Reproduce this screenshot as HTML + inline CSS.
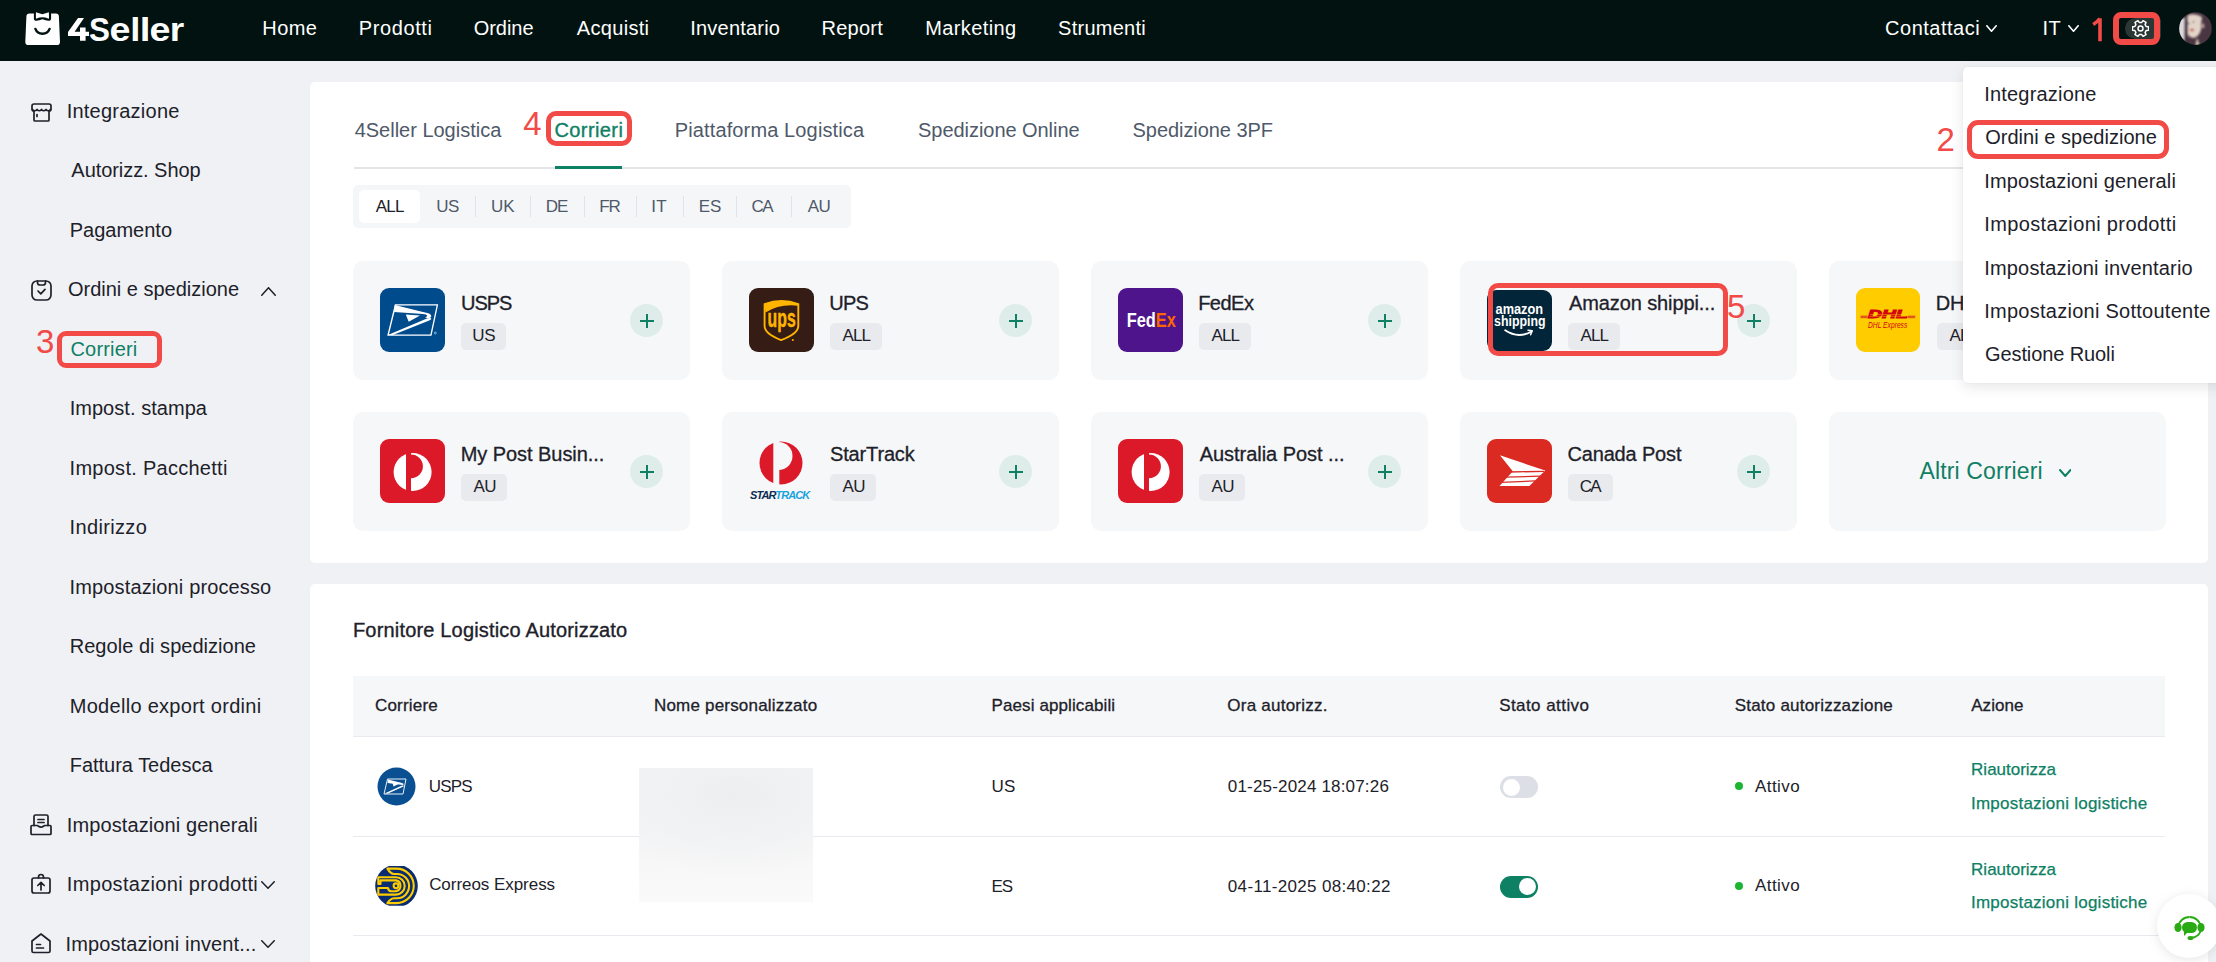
<!DOCTYPE html>
<html><head><meta charset="utf-8"><style>
html,body{margin:0;padding:0}
body{width:2216px;height:962px;overflow:hidden;position:relative;background:#f0f1f5;font-family:"Liberation Sans",sans-serif}
.t{position:absolute;white-space:nowrap;line-height:1}
.r{position:absolute;display:block}
</style></head><body>
<div class="r" style="left:0px;top:0px;width:2216px;height:61px;background:#021210"></div>
<svg class="r" style="left:25px;top:11px;" width="36" height="36" viewBox="0 0 36 36">
<path d="M1.4 5.6 Q1.4 2.5 4.5 2.5 H30.8 Q33.9 2.5 33.9 5.6 L35 31 Q35 34.1 31.9 34.1 H3.4 Q0.3 34.1 0.3 31 Z" fill="#fff"/>
<path d="M8.9 -1 H26.1 V7.2 Q26.1 9.8 23.5 9.8 Q20.4 9.6 17.4 8.3 Q14.4 9.6 11.5 9.8 Q8.9 9.8 8.9 7.2 Z" fill="#021210"/>
<path d="M10.9 1.9 Q10.9 1.1 11.7 1.4 L17.4 3.3 L23.1 1.4 Q23.9 1.1 23.9 1.9 L24 7 Q24 7.9 23.2 7.6 Q20.3 6.3 17.4 6.3 Q14.5 6.3 11.6 7.6 Q10.9 7.9 10.9 7 Z" fill="#fff"/>
<path d="M10.4 17.9 A7.6 7.6 0 0 0 24.6 17.9" stroke="#021210" stroke-width="2.4" fill="none" stroke-linecap="round"/>
</svg>
<svg class="r" style="left:0px;top:0px;" width="200" height="61" viewBox="0 0 200 61"><path d="M78 17.9 L84 17.9 L74.6 31.8 L80 31.8 L80 27.6 L85.6 27.6 L85.6 31.8 L89 31.8 L89 35.9 L85.6 35.9 L85.6 40.8 L80 40.8 L80 35.9 L68 35.9 L68 32 Z" fill="#fff"/><text transform="translate(89.00 40.9) scale(0.951 1)" font-family="Liberation Sans" font-weight="bold" font-size="33" fill="#fff">S</text><text transform="translate(109.53 40.9) scale(1.142 1)" font-family="Liberation Sans" font-weight="bold" font-size="33" fill="#fff">e</text><text transform="translate(130.16 40.9) scale(1.104 1)" font-family="Liberation Sans" font-weight="bold" font-size="33" fill="#fff">l</text><text transform="translate(139.70 40.9) scale(1.171 1)" font-family="Liberation Sans" font-weight="bold" font-size="33" fill="#fff">l</text><text transform="translate(149.43 40.9) scale(1.142 1)" font-family="Liberation Sans" font-weight="bold" font-size="33" fill="#fff">e</text><text transform="translate(169.85 40.9) scale(1.126 1)" font-family="Liberation Sans" font-weight="bold" font-size="33" fill="#fff">r</text></svg>
<div class="t" style="left:262.36px;top:18.07px;font-size:20px;letter-spacing:0.36px;color:#ffffff;">Home</div>
<div class="t" style="left:358.86px;top:18.07px;font-size:20px;letter-spacing:0.58px;color:#ffffff;">Prodotti</div>
<div class="t" style="left:473.65px;top:18.07px;font-size:20px;letter-spacing:-0.019px;color:#ffffff;">Ordine</div>
<div class="t" style="left:576.86px;top:18.07px;font-size:20px;letter-spacing:0.308px;color:#ffffff;">Acquisti</div>
<div class="t" style="left:690.25px;top:18.07px;font-size:20px;letter-spacing:0.206px;color:#ffffff;">Inventario</div>
<div class="t" style="left:821.46px;top:18.07px;font-size:20px;letter-spacing:0.252px;color:#ffffff;">Report</div>
<div class="t" style="left:925.26px;top:18.07px;font-size:20px;letter-spacing:0.39px;color:#ffffff;">Marketing</div>
<div class="t" style="left:1058.09px;top:18.07px;font-size:20px;letter-spacing:0.259px;color:#ffffff;">Strumenti</div>
<div class="t" style="left:1885.08px;top:18.07px;font-size:20px;letter-spacing:0.502px;color:#ffffff;">Contattaci</div>
<svg class="r" style="left:1986px;top:24.5px;" width="11" height="7" viewBox="0 0 11 7"><path d="M0.8 0.8 L5.5 6.2 L10.2 0.8" fill="none" stroke="#ffffff" stroke-width="1.6" stroke-linecap="round" stroke-linejoin="round"/></svg>
<div class="t" style="left:2042.4px;top:18.07px;font-size:20px;letter-spacing:0.581px;color:#ffffff;">IT</div>
<svg class="r" style="left:2068px;top:24.5px;" width="11" height="7" viewBox="0 0 11 7"><path d="M0.8 0.8 L5.5 6.2 L10.2 0.8" fill="none" stroke="#ffffff" stroke-width="1.6" stroke-linecap="round" stroke-linejoin="round"/></svg>
<svg class="r" style="left:2090px;top:16px;" width="16" height="27" viewBox="0 0 16 27"><path d="M10 2.2 V25.2 M10 2.6 Q7 6 3.2 8.5" fill="none" stroke="#f24a47" stroke-width="3.6" stroke-linejoin="miter"/></svg>
<div class="r" style="left:2124.5px;top:18px;width:36px;height:21px;background:#2b3734;border-radius:10.5px 3px 3px 10.5px"></div>
<svg class="r" style="left:2132px;top:19.8px;" width="17" height="17" viewBox="0 0 17 17"><g fill="none" stroke="#fff" stroke-width="1.5" stroke-linejoin="round"><path d="M14.14 6.45 L16.52 6.80 L16.52 10.20 L14.14 10.55 L13.10 12.36 L13.99 14.59 L11.03 16.30 L9.54 14.41 L7.46 14.41 L5.97 16.30 L3.01 14.59 L3.90 12.36 L2.86 10.55 L0.48 10.20 L0.48 6.80 L2.86 6.45 L3.90 4.64 L3.01 2.41 L5.97 0.70 L7.46 2.59 L9.54 2.59 L11.03 0.70 L13.99 2.41 L13.10 4.64 Z"/><circle cx="8.5" cy="8.5" r="2.5"/></g></svg>
<div class="r" style="left:2113.4px;top:11.9px;width:46.5px;height:33px;border:6.2px solid #f24a47;border-radius:8px;box-sizing:border-box"></div>
<svg class="r" style="left:2179px;top:12px" width="33" height="33" viewBox="0 0 33 33"><defs><clipPath id="avc"><circle cx="16.5" cy="16.5" r="16.3"/></clipPath><filter id="avb"><feGaussianBlur stdDeviation="0.8"/></filter></defs>
<g clip-path="url(#avc)"><rect width="33" height="33" fill="#4a3542"/><g filter="url(#avb)">
<rect x="-2" y="6" width="8" height="22" fill="#dcd9dc"/>
<path d="M-2 26 Q3 25 6 29 L6 36 L-2 36Z" fill="#d9c6b9"/>
<path d="M9 3 Q17 1 23 5 Q22 10 22 18 Q20 25 14 26 Q9 25 8.5 20 Q7 10 9 3Z" fill="#e2d4c8"/>
<path d="M5.5 5 Q8 4 9 8 L9 30 L5 30Z" fill="#4b3542"/>
<path d="M18 26 Q20 29 20.5 35 L16 35 Q17 30 18 26Z" fill="#dccab9"/>
<path d="M23.5 11 Q26 12 25 16 L22.5 16Z" fill="#cdb5a6"/>
<ellipse cx="13" cy="18" rx="2.2" ry="1.2" fill="#c83a3a"/>
<circle cx="14.5" cy="10" r="0.8" fill="#3a3050"/><circle cx="10" cy="11.5" r="0.8" fill="#3a3050"/>
</g></g></svg>
<svg class="r" style="left:30.5px;top:102px;" width="22" height="21" viewBox="0 0 22 21"><g fill="none" stroke="#1d2129" stroke-width="1.7" stroke-linejoin="round" stroke-linecap="round">
<path d="M3 2 h15 q2 0 2 2 v3 q0 2 -2 2 v9 q0 1 -1 1 h-13 q-1 0 -1 -1 v-9 q-2 0 -2 -2 v-3 q0 -2 2 -2z"/>
<path d="M1.5 7.5 q2.2 2.5 4.5 0 q2.2 2.5 4.5 0 q2.2 2.5 4.5 0 q2.2 2.5 4.5 0"/>
<path d="M6 12.5 v2"/></g></svg>
<svg class="r" style="left:30.5px;top:279.5px;" width="21" height="21" viewBox="0 0 21 21"><g fill="none" stroke="#1d2129" stroke-width="1.7" stroke-linejoin="round" stroke-linecap="round">
<rect x="1" y="1" width="19" height="19" rx="5"/>
<path d="M6.5 1.2 v1.3 q0 2.5 2.5 2.5 h3 q2.5 0 2.5 -2.5 v-1.3"/>
<path d="M7 11 l2.8 2.8 l4.2 -4.5"/></g></svg>
<svg class="r" style="left:30px;top:814px;" width="22" height="22" viewBox="0 0 22 22"><g fill="none" stroke="#1d2129" stroke-width="1.7" stroke-linejoin="round" stroke-linecap="round">
<path d="M4 11.5 v-9 q0 -1.5 1.5 -1.5 h11 q1.5 0 1.5 1.5 v9"/>
<path d="M1 12.5 q0 -1 1 -1 h5 q1 0 1.5 0.7 q2.5 1.8 5 0 q0.5 -0.7 1.5 -0.7 h5 q1 0 1 1 v7 q0 1 -1 1 h-18 q-1 0 -1 -1 z"/>
<path d="M8 5.5 h6 M8 8.5 h6"/></g></svg>
<svg class="r" style="left:31px;top:872.5px;" width="20" height="22" viewBox="0 0 20 22"><g fill="none" stroke="#1d2129" stroke-width="1.7" stroke-linejoin="round" stroke-linecap="round">
<rect x="1" y="5" width="18" height="15" rx="2"/>
<path d="M7.5 5 v-1 q0 -2.5 2.5 -2.5 q2.5 0 2.5 2.5 v1"/>
<path d="M10 17 v-7.5 M6.8 12.5 l3.2 -3.2 l3.2 3.2"/></g></svg>
<svg class="r" style="left:30.5px;top:933px;" width="20" height="21" viewBox="0 0 20 21"><g fill="none" stroke="#1d2129" stroke-width="1.7" stroke-linejoin="round" stroke-linecap="round">
<path d="M1 8 l9 -7 l9 7 v10 q0 1.5 -1.5 1.5 h-15 q-1.5 0 -1.5 -1.5 z"/>
<path d="M5.5 11.5 h4 M5.5 15 h7"/></g></svg>
<div class="t" style="left:66.65px;top:100.97px;font-size:20px;letter-spacing:0.241px;color:#1d2129;">Integrazione</div>
<div class="t" style="left:71.36px;top:160.47px;font-size:20px;letter-spacing:-0.061px;color:#1d2129;">Autorizz. Shop</div>
<div class="t" style="left:69.76px;top:219.97px;font-size:20px;letter-spacing:-0.002px;color:#1d2129;">Pagamento</div>
<div class="t" style="left:67.95px;top:279.47px;font-size:20px;letter-spacing:-0.004px;color:#1d2129;">Ordini e spedizione</div>
<div class="t" style="left:70.48px;top:338.97px;font-size:20px;letter-spacing:0.172px;color:#0e8064;">Corrieri</div>
<div class="t" style="left:69.65px;top:398.47px;font-size:20px;letter-spacing:0.048px;color:#1d2129;">Impost. stampa</div>
<div class="t" style="left:69.55px;top:457.97px;font-size:20px;letter-spacing:0.275px;color:#1d2129;">Impost. Pacchetti</div>
<div class="t" style="left:69.55px;top:517.47px;font-size:20px;letter-spacing:0.352px;color:#1d2129;">Indirizzo</div>
<div class="t" style="left:69.55px;top:576.97px;font-size:20px;letter-spacing:0.135px;color:#1d2129;">Impostazioni processo</div>
<div class="t" style="left:69.76px;top:636.47px;font-size:20px;letter-spacing:0.029px;color:#1d2129;">Regole di spedizione</div>
<div class="t" style="left:69.76px;top:695.97px;font-size:20px;letter-spacing:0.287px;color:#1d2129;">Modello export ordini</div>
<div class="t" style="left:69.76px;top:755.47px;font-size:20px;letter-spacing:-0.02px;color:#1d2129;">Fattura Tedesca</div>
<div class="t" style="left:66.85px;top:814.97px;font-size:20px;letter-spacing:0.095px;color:#1d2129;">Impostazioni generali</div>
<div class="t" style="left:66.85px;top:874.47px;font-size:20px;letter-spacing:0.318px;color:#1d2129;">Impostazioni prodotti</div>
<div class="t" style="left:65.45px;top:933.97px;font-size:20px;letter-spacing:0.138px;color:#1d2129;">Impostazioni invent...</div>
<svg class="r" style="left:261px;top:286.5px;" width="15" height="9" viewBox="0 0 15 9"><path d="M0.75 8.25 L7.5 0.75 L14.25 8.25" fill="none" stroke="#1d2129" stroke-width="1.5" stroke-linecap="round" stroke-linejoin="round"/></svg>
<svg class="r" style="left:261px;top:880.5px;" width="14" height="8" viewBox="0 0 14 8"><path d="M0.75 0.75 L7.0 7.25 L13.25 0.75" fill="none" stroke="#1d2129" stroke-width="1.5" stroke-linecap="round" stroke-linejoin="round"/></svg>
<svg class="r" style="left:261px;top:940px;" width="14" height="8" viewBox="0 0 14 8"><path d="M0.75 0.75 L7.0 7.25 L13.25 0.75" fill="none" stroke="#1d2129" stroke-width="1.5" stroke-linecap="round" stroke-linejoin="round"/></svg>
<div class="t" style="left:36.04px;top:325.06px;font-size:33px;letter-spacing:0px;color:#f24a47;">3</div>
<div class="r" style="left:57px;top:331px;width:104.6px;height:36.6px;border:5.5px solid #f24a47;border-radius:9px;box-sizing:border-box"></div>
<div class="r" style="left:310px;top:82px;width:1898px;height:481px;background:#fff;border-radius:5px"></div>
<div class="r" style="left:354px;top:167px;width:1811px;height:2px;background:#e3e5e9"></div>
<div class="r" style="left:555px;top:166px;width:67px;height:3px;background:#0e8064"></div>
<div class="t" style="left:354.64px;top:120.47px;font-size:20px;letter-spacing:-0.006px;color:#4e5969;">4Seller Logistica</div>
<div class="t" style="left:554.48px;top:120.47px;font-size:20px;letter-spacing:0.401px;color:#0e8064;-webkit-text-stroke:0.35px #0e8064">Corrieri</div>
<div class="t" style="left:674.76px;top:120.47px;font-size:20px;letter-spacing:0.129px;color:#4e5969;">Piattaforma Logistica</div>
<div class="t" style="left:918.09px;top:120.47px;font-size:20px;letter-spacing:-0.052px;color:#4e5969;">Spedizione Online</div>
<div class="t" style="left:1132.59px;top:120.47px;font-size:20px;letter-spacing:-0.061px;color:#4e5969;">Spedizione 3PF</div>
<div class="t" style="left:523.34px;top:106.96px;font-size:33px;letter-spacing:0px;color:#f24a47;">4</div>
<div class="r" style="left:546px;top:111px;width:86.4px;height:34.5px;border:5.5px solid #f24a47;border-radius:10px;box-sizing:border-box"></div>
<div class="r" style="left:353px;top:185px;width:498px;height:43px;background:#f5f6f8;border-radius:5px"></div>
<div class="r" style="left:359px;top:190px;width:61px;height:32.5px;background:#fff;border-radius:5px"></div>
<div class="t" style="left:375.87px;top:197.61px;font-size:17px;letter-spacing:-0.825px;color:#1d2129;">ALL</div>
<div class="t" style="left:436.19px;top:197.61px;font-size:17px;letter-spacing:-0.524px;color:#4e5969;">US</div>
<div class="t" style="left:491.09px;top:197.61px;font-size:17px;letter-spacing:-0.213px;color:#4e5969;">UK</div>
<div class="t" style="left:545.71px;top:197.61px;font-size:17px;letter-spacing:-1.091px;color:#4e5969;">DE</div>
<div class="t" style="left:599.31px;top:197.61px;font-size:17px;letter-spacing:-1.278px;color:#4e5969;">FR</div>
<div class="t" style="left:651.13px;top:197.61px;font-size:17px;letter-spacing:0.352px;color:#4e5969;">IT</div>
<div class="t" style="left:698.71px;top:197.61px;font-size:17px;letter-spacing:-0.103px;color:#4e5969;">ES</div>
<div class="t" style="left:751.44px;top:197.61px;font-size:17px;letter-spacing:-1.519px;color:#4e5969;">CA</div>
<div class="t" style="left:807.77px;top:197.61px;font-size:17px;letter-spacing:-0.571px;color:#4e5969;">AU</div>
<div class="r" style="left:475px;top:196px;width:1px;height:21px;background:#e1e3e8"></div>
<div class="r" style="left:530px;top:196px;width:1px;height:21px;background:#e1e3e8"></div>
<div class="r" style="left:584px;top:196px;width:1px;height:21px;background:#e1e3e8"></div>
<div class="r" style="left:636px;top:196px;width:1px;height:21px;background:#e1e3e8"></div>
<div class="r" style="left:683px;top:196px;width:1px;height:21px;background:#e1e3e8"></div>
<div class="r" style="left:736px;top:196px;width:1px;height:21px;background:#e1e3e8"></div>
<div class="r" style="left:791px;top:196px;width:1px;height:21px;background:#e1e3e8"></div>
<div class="r" style="left:353px;top:261px;width:337px;height:118.5px;background:#f6f7f9;border-radius:10px"></div>
<div class="r" style="left:722px;top:261px;width:337px;height:118.5px;background:#f6f7f9;border-radius:10px"></div>
<div class="r" style="left:1091px;top:261px;width:337px;height:118.5px;background:#f6f7f9;border-radius:10px"></div>
<div class="r" style="left:1460px;top:261px;width:337px;height:118.5px;background:#f6f7f9;border-radius:10px"></div>
<div class="r" style="left:1829px;top:261px;width:337px;height:118.5px;background:#f6f7f9;border-radius:10px"></div>
<div class="r" style="left:353px;top:412px;width:337px;height:118.5px;background:#f6f7f9;border-radius:10px"></div>
<div class="r" style="left:722px;top:412px;width:337px;height:118.5px;background:#f6f7f9;border-radius:10px"></div>
<div class="r" style="left:1091px;top:412px;width:337px;height:118.5px;background:#f6f7f9;border-radius:10px"></div>
<div class="r" style="left:1460px;top:412px;width:337px;height:118.5px;background:#f6f7f9;border-radius:10px"></div>
<div class="r" style="left:1829px;top:412px;width:337px;height:118.5px;background:#f6f7f9;border-radius:10px"></div>
<svg class="r" style="left:380px;top:288px" width="65" height="64" viewBox="0 0 65 64"><rect x="0" y="0" width="65" height="64" rx="9" fill="#004b8c"/><g fill="#fff">
<path d="M14.9 16.3 L58.2 16.3 L51.5 47.8 L7.2 47.8 Z M16.1 17.6 L8.9 46.5 L50.4 46.5 L56.6 17.6 Z" fill-rule="evenodd"/>
<path d="M14.8 17.1 L44 24.2 Q51.5 25.4 51.3 28.2 Q51 30.2 48 30.3 L45 29.2 Q47.6 28.6 47.2 27.5 Q46.7 26.4 43 26.1 L14.1 24.1 Z"/>
<path d="M25.8 26.6 L40 27.6 L28.7 33.7 Z"/>
<path d="M7.9 47 L47.5 30.3 Q51.5 29.5 51.3 30.9 Q50.9 32.1 48 32.9 L12.9 47 Z"/>
<circle cx="55.3" cy="45" r="1" fill="none" stroke="#fff" stroke-width="0.5"/>
</g></svg>
<svg class="r" style="left:749px;top:288px" width="65" height="64" viewBox="0 0 65 64"><rect x="0" y="0" width="65" height="64" rx="9" fill="#351c15"/><path d="M15.6 16.2 Q32.5 9.5 49.3 16.2 L49.3 37.9 Q49.3 45.5 32.1 52.1 Q15.6 45.5 15.6 37.9 Z" fill="none" stroke="#ffb500" stroke-width="1.9"/>
<path d="M15.6 16.2 Q32.5 9.5 49.3 16.2 L49.3 17.8 Q31 15.5 16.5 24.5 Z" fill="#ffb500"/>
<text x="18.6" y="39.4" font-family="Liberation Sans" font-weight="bold" font-size="25" fill="#ffb500" stroke="#ffb500" stroke-width="0.5" textLength="28.1" lengthAdjust="spacingAndGlyphs">ups</text>
<circle cx="43.8" cy="52" r="1" fill="#ffb500"/></svg>
<svg class="r" style="left:1118px;top:288px" width="65" height="64" viewBox="0 0 65 64"><rect x="0" y="0" width="65" height="64" rx="9" fill="#4d148c"/><text x="8.7" y="39.1" font-family="Liberation Sans" font-weight="bold" font-size="20" textLength="49.1" lengthAdjust="spacingAndGlyphs"><tspan fill="#fff">Fed</tspan><tspan fill="#ff6600">Ex</tspan></text></svg>
<svg class="r" style="left:1487px;top:289.5px" width="65" height="61" viewBox="0 0 65 61"><rect x="0" y="0" width="65" height="61" rx="9" fill="#022539"/><text x="8.6" y="23.7" font-family="Liberation Sans" font-weight="bold" font-size="14.5" fill="#fff" textLength="47.5" lengthAdjust="spacingAndGlyphs">amazon</text>
<text x="7.1" y="36.4" font-family="Liberation Sans" font-weight="bold" font-size="14.5" fill="#fff" textLength="51.6" lengthAdjust="spacingAndGlyphs">shipping</text>
<path d="M18.2 40.3 Q31 49 44.5 41.5" stroke="#fff" stroke-width="1.9" fill="none" stroke-linecap="round"/>
<path d="M41 40.2 L45.2 40.8 L43.6 44.8" stroke="#fff" stroke-width="1.5" fill="none" stroke-linecap="round" stroke-linejoin="round"/></svg>
<svg class="r" style="left:1856px;top:288px" width="64" height="64" viewBox="0 0 64 64"><rect x="0" y="0" width="64" height="64" rx="9" fill="#ffcc00"/><g fill="#d40511">
<rect x="4.5" y="27.6" width="7" height="2.6" fill="#e2571b"/><rect x="52" y="27.6" width="7.2" height="2.6" fill="#e2571b"/>
<text x="12" y="30.2" font-family="Liberation Sans" font-weight="bold" font-style="italic" font-size="10.9" stroke="#d40511" stroke-width="0.9" textLength="39.7" lengthAdjust="spacingAndGlyphs">DHL</text>
<path d="M14 26.6 H50 M13.5 28.4 H50" stroke="#ffcc00" stroke-width="0.45"/>
<text x="12" y="40.3" font-family="Liberation Sans" font-style="italic" font-size="9.3" textLength="39.3" lengthAdjust="spacingAndGlyphs">DHL Express</text>
</g></svg>
<svg class="r" style="left:380px;top:439px" width="65" height="64" viewBox="0 0 65 64"><rect x="0" y="0" width="65" height="64" rx="9" fill="#dc1928"/><circle cx="32.6" cy="33" r="19" fill="#fff"/>
<rect x="26" y="12" width="5" height="42" fill="#dc1928"/>
<path d="M31 15.4 A11.9 11.9 0 0 1 31 39.2 Z" fill="#dc1928"/></svg>
<svg class="r" style="left:1118px;top:439px" width="65" height="64" viewBox="0 0 65 64"><rect x="0" y="0" width="65" height="64" rx="9" fill="#dc1928"/><circle cx="32.6" cy="33" r="19" fill="#fff"/>
<rect x="26" y="12" width="5" height="42" fill="#dc1928"/>
<path d="M31 15.4 A11.9 11.9 0 0 1 31 39.2 Z" fill="#dc1928"/></svg>
<svg class="r" style="left:749px;top:438px" width="65" height="64" viewBox="0 0 65 64"><circle cx="32" cy="25" r="21.5" fill="#dc1928"/>
<rect x="24.3" y="2" width="6" height="46" fill="#f6f7f9"/>
<path d="M29.5 4 A14 14 0 0 1 29.5 32 Z" fill="#f6f7f9"/>
<text x="1" y="61" font-family="Liberation Sans" font-weight="bold" font-style="italic" font-size="11" letter-spacing="-0.9"><tspan fill="#0b2d52">STAR</tspan><tspan fill="#1ba2de">TRACK</tspan></text></svg>
<svg class="r" style="left:1487px;top:439px" width="65" height="64" viewBox="0 0 65 64"><rect x="0" y="0" width="65" height="64" rx="9" fill="#da2a22"/><path d="M12.9 16.3 L58.2 31.6 L42.4 47 L12.5 47 L25.8 32.2 Z" fill="#fff"/>
<g stroke="#da2a22" stroke-width="1.3"><path d="M22 33 L57 32.4"/><path d="M18 38.2 L53 37.2"/><path d="M14 43.4 L48.5 41.9"/></g></svg>
<div class="t" style="left:460.96px;top:293.07px;font-size:20px;letter-spacing:-1.001px;color:#1d2129;-webkit-text-stroke:0.3px #1d2129">USPS</div>
<div class="r" style="left:461px;top:323px;width:45.30000000000001px;height:27px;background:#e9eaee;border-radius:5px"></div>
<div class="t" style="left:472.19px;top:327.41px;font-size:17px;letter-spacing:-0.224px;color:#1d2129;">US</div>
<div class="r" style="left:630px;top:304px;width:33px;height:33px;background:#deedea;border-radius:50%"></div>
<div class="r" style="left:639.5px;top:319.5px;width:14px;height:2px;background:#0e8064"></div>
<div class="r" style="left:645.5px;top:313.5px;width:2px;height:14px;background:#0e8064"></div>
<div class="t" style="left:829.36px;top:293.07px;font-size:20px;letter-spacing:-0.831px;color:#1d2129;-webkit-text-stroke:0.3px #1d2129">UPS</div>
<div class="r" style="left:830px;top:323px;width:52px;height:27px;background:#e9eaee;border-radius:5px"></div>
<div class="t" style="left:842.47px;top:327.41px;font-size:17px;letter-spacing:-0.825px;color:#1d2129;">ALL</div>
<div class="r" style="left:999px;top:304px;width:33px;height:33px;background:#deedea;border-radius:50%"></div>
<div class="r" style="left:1008.5px;top:319.5px;width:14px;height:2px;background:#0e8064"></div>
<div class="r" style="left:1014.5px;top:313.5px;width:2px;height:14px;background:#0e8064"></div>
<div class="t" style="left:1198.16px;top:293.07px;font-size:20px;letter-spacing:-0.512px;color:#1d2129;-webkit-text-stroke:0.3px #1d2129">FedEx</div>
<div class="r" style="left:1199px;top:323px;width:52px;height:27px;background:#e9eaee;border-radius:5px"></div>
<div class="t" style="left:1211.47px;top:327.41px;font-size:17px;letter-spacing:-0.825px;color:#1d2129;">ALL</div>
<div class="r" style="left:1368px;top:304px;width:33px;height:33px;background:#deedea;border-radius:50%"></div>
<div class="r" style="left:1377.5px;top:319.5px;width:14px;height:2px;background:#0e8064"></div>
<div class="r" style="left:1383.5px;top:313.5px;width:2px;height:14px;background:#0e8064"></div>
<div class="t" style="left:1569.06px;top:293.07px;font-size:20px;letter-spacing:-0.112px;color:#1d2129;-webkit-text-stroke:0.3px #1d2129">Amazon shippi...</div>
<div class="r" style="left:1568px;top:323px;width:52px;height:27px;background:#e9eaee;border-radius:5px"></div>
<div class="t" style="left:1580.47px;top:327.41px;font-size:17px;letter-spacing:-0.825px;color:#1d2129;">ALL</div>
<div class="r" style="left:1737px;top:304px;width:33px;height:33px;background:#deedea;border-radius:50%"></div>
<div class="r" style="left:1746.5px;top:319.5px;width:14px;height:2px;background:#0e8064"></div>
<div class="r" style="left:1752.5px;top:313.5px;width:2px;height:14px;background:#0e8064"></div>
<div class="t" style="left:1935.86px;top:293.07px;font-size:20px;letter-spacing:-0.3px;color:#1d2129;-webkit-text-stroke:0.3px #1d2129">DHL Express</div>
<div class="r" style="left:1937px;top:323px;width:52px;height:27px;background:#e9eaee;border-radius:5px"></div>
<div class="t" style="left:1949.47px;top:327.41px;font-size:17px;letter-spacing:-0.825px;color:#1d2129;">ALL</div>
<div class="r" style="left:2106px;top:304px;width:33px;height:33px;background:#deedea;border-radius:50%"></div>
<div class="r" style="left:2115.5px;top:319.5px;width:14px;height:2px;background:#0e8064"></div>
<div class="r" style="left:2121.5px;top:313.5px;width:2px;height:14px;background:#0e8064"></div>
<div class="t" style="left:460.76px;top:444.07px;font-size:20px;letter-spacing:-0.062px;color:#1d2129;-webkit-text-stroke:0.3px #1d2129">My Post Busin...</div>
<div class="r" style="left:461px;top:474px;width:45.60000000000002px;height:27px;background:#e9eaee;border-radius:5px"></div>
<div class="t" style="left:473.47px;top:478.41px;font-size:17px;letter-spacing:-0.671px;color:#1d2129;">AU</div>
<div class="r" style="left:630px;top:455px;width:33px;height:33px;background:#deedea;border-radius:50%"></div>
<div class="r" style="left:639.5px;top:470.5px;width:14px;height:2px;background:#0e8064"></div>
<div class="r" style="left:645.5px;top:464.5px;width:2px;height:14px;background:#0e8064"></div>
<div class="t" style="left:829.99px;top:444.07px;font-size:20px;letter-spacing:-0.15px;color:#1d2129;-webkit-text-stroke:0.3px #1d2129">StarTrack</div>
<div class="r" style="left:830px;top:474px;width:45.60000000000002px;height:27px;background:#e9eaee;border-radius:5px"></div>
<div class="t" style="left:842.47px;top:478.41px;font-size:17px;letter-spacing:-0.671px;color:#1d2129;">AU</div>
<div class="r" style="left:999px;top:455px;width:33px;height:33px;background:#deedea;border-radius:50%"></div>
<div class="r" style="left:1008.5px;top:470.5px;width:14px;height:2px;background:#0e8064"></div>
<div class="r" style="left:1014.5px;top:464.5px;width:2px;height:14px;background:#0e8064"></div>
<div class="t" style="left:1199.76px;top:444.07px;font-size:20px;letter-spacing:-0.044px;color:#1d2129;-webkit-text-stroke:0.3px #1d2129">Australia Post ...</div>
<div class="r" style="left:1199px;top:474px;width:45.59999999999991px;height:27px;background:#e9eaee;border-radius:5px"></div>
<div class="t" style="left:1211.47px;top:478.41px;font-size:17px;letter-spacing:-0.671px;color:#1d2129;">AU</div>
<div class="r" style="left:1368px;top:455px;width:33px;height:33px;background:#deedea;border-radius:50%"></div>
<div class="r" style="left:1377.5px;top:470.5px;width:14px;height:2px;background:#0e8064"></div>
<div class="r" style="left:1383.5px;top:464.5px;width:2px;height:14px;background:#0e8064"></div>
<div class="t" style="left:1567.48px;top:444.07px;font-size:20px;letter-spacing:-0.167px;color:#1d2129;-webkit-text-stroke:0.3px #1d2129">Canada Post</div>
<div class="r" style="left:1568px;top:474px;width:45px;height:27px;background:#e9eaee;border-radius:5px"></div>
<div class="t" style="left:1579.64px;top:478.41px;font-size:17px;letter-spacing:-1.719px;color:#1d2129;">CA</div>
<div class="r" style="left:1737px;top:455px;width:33px;height:33px;background:#deedea;border-radius:50%"></div>
<div class="r" style="left:1746.5px;top:470.5px;width:14px;height:2px;background:#0e8064"></div>
<div class="r" style="left:1752.5px;top:464.5px;width:2px;height:14px;background:#0e8064"></div>
<div class="t" style="left:1919.46px;top:460.13px;font-size:23px;letter-spacing:0.139px;color:#0e8064;">Altri Corrieri</div>
<svg class="r" style="left:2058.5px;top:469px;" width="12.5" height="8" viewBox="0 0 12.5 8"><path d="M1.0 1.0 L6.25 7.0 L11.5 1.0" fill="none" stroke="#0e8064" stroke-width="2" stroke-linecap="round" stroke-linejoin="round"/></svg>
<div class="t" style="left:1727.08px;top:290.16px;font-size:33px;letter-spacing:0px;color:#f24a47;">5</div>
<div class="r" style="left:1488px;top:283.4px;width:239.8px;height:73.1px;border:5.8px solid #f24a47;border-radius:10px;box-sizing:border-box"></div>
<div class="r" style="left:310px;top:584px;width:1898px;height:400px;background:#fff;border-radius:5px"></div>
<div class="t" style="left:352.96px;top:620.47px;font-size:20px;letter-spacing:0.175px;color:#1d2129;-webkit-text-stroke:0.35px #1d2129">Fornitore Logistico Autorizzato</div>
<div class="r" style="left:353px;top:676px;width:1812px;height:60.5px;background:#f6f7f9"></div>
<div class="r" style="left:353px;top:736px;width:1812px;height:1px;background:#e8eaef"></div>
<div class="t" style="left:374.94px;top:697.11px;font-size:17px;letter-spacing:0.203px;color:#1d2129;-webkit-text-stroke:0.3px #1d2129">Corriere</div>
<div class="t" style="left:654.01px;top:697.11px;font-size:17px;letter-spacing:0.19px;color:#1d2129;-webkit-text-stroke:0.3px #1d2129">Nome personalizzato</div>
<div class="t" style="left:991.51px;top:697.11px;font-size:17px;letter-spacing:0.108px;color:#1d2129;-webkit-text-stroke:0.3px #1d2129">Paesi applicabili</div>
<div class="t" style="left:1227.29px;top:697.11px;font-size:17px;letter-spacing:0.237px;color:#1d2129;-webkit-text-stroke:0.3px #1d2129">Ora autorizz.</div>
<div class="t" style="left:1499.13px;top:697.11px;font-size:17px;letter-spacing:0.44px;color:#1d2129;-webkit-text-stroke:0.3px #1d2129">Stato attivo</div>
<div class="t" style="left:1734.73px;top:697.11px;font-size:17px;letter-spacing:0.21px;color:#1d2129;-webkit-text-stroke:0.3px #1d2129">Stato autorizzazione</div>
<div class="t" style="left:1971.17px;top:697.11px;font-size:17px;letter-spacing:0.082px;color:#1d2129;-webkit-text-stroke:0.3px #1d2129">Azione</div>
<div class="r" style="left:353px;top:836px;width:1812px;height:1px;background:#e8eaef"></div>
<div class="r" style="left:353px;top:935px;width:1812px;height:1px;background:#e8eaef"></div>
<svg class="r" style="left:377px;top:767px" width="39" height="39" viewBox="0 0 39 39"><circle cx="19.5" cy="19.5" r="19" fill="#0a4f91"/>
<g fill="none" stroke="#e8f0f8" stroke-width="1"><path d="M10.5 12 L29 12 L26 27 L7 27 Z"/></g>
<g fill="#fff"><path d="M11 12.5 L25 16 Q27.5 16.8 26 18 L10.5 16 Z"/><path d="M7.5 26.5 L25 18.5 Q27.5 18 26.5 19.5 L11 26.5 Z"/><path d="M15.5 16 L21.5 17 L16.5 19.5Z"/></g></svg>
<div class="t" style="left:428.69px;top:777.91px;font-size:17px;letter-spacing:-0.834px;color:#1d2129;">USPS</div>
<div class="t" style="left:991.59px;top:777.81px;font-size:17px;letter-spacing:0.076px;color:#1d2129;">US</div>
<div class="t" style="left:1227.84px;top:777.81px;font-size:17px;letter-spacing:0.175px;color:#1d2129;">01-25-2024 18:07:26</div>
<div class="r" style="left:1500px;top:776px;width:37.5px;height:22px;background:#dcdfe6;border-radius:11px"></div>
<div class="r" style="left:1502.5px;top:778.5px;width:17px;height:17px;background:#fff;border-radius:50%"></div>
<div class="r" style="left:1734.7px;top:782.2px;width:8px;height:8px;background:#1bb532;border-radius:50%"></div>
<div class="t" style="left:1754.97px;top:777.61px;font-size:17px;letter-spacing:0.446px;color:#1d2129;">Attivo</div>
<div class="t" style="left:1971.11px;top:760.81px;font-size:17px;letter-spacing:-0.014px;color:#0e8064;-webkit-text-stroke:0.25px #0e8064">Riautorizza</div>
<div class="t" style="left:1970.93px;top:794.81px;font-size:17px;letter-spacing:0.241px;color:#0e8064;-webkit-text-stroke:0.25px #0e8064">Impostazioni logistiche</div>
<div class="r" style="left:639px;top:768px;width:174px;height:134px;background:radial-gradient(ellipse 90% 60% at 55% 20%, #edeeef 0%, #f1f2f3 50%, rgba(247,247,248,0) 100%), linear-gradient(180deg,#f2f3f4 0%,#f6f6f7 60%,#fafafa 100%)"></div>
<svg class="r" style="left:375px;top:864px" width="43" height="43" viewBox="0 0 43 43"><defs><clipPath id="cc"><rect x="0" y="2" width="43" height="39.7"/></clipPath></defs><g clip-path="url(#cc)"><circle cx="21.5" cy="21.9" r="21.3" fill="#0b2c6e"/>
<g fill="none" stroke="#ffcc00" stroke-width="2.1" stroke-linejoin="round">
<path d="M12.4 4.6 H21.5 A17.25 17.25 0 0 1 21.5 39.1 H12.4 Q15.5 34.4 19 34.2 H22 A12.1 12.1 0 0 0 22 10 H19 Q15.5 9.8 12.4 4.6 Z"/>
<path d="M3.3 13.2 H21 A8.7 8.7 0 0 1 21 30.6 H3.3 V24 H13 Q13.5 27 16 27.2 H21 A5.5 5.5 0 0 0 21 16.4 H5.5 V20 H3.3 Z"/>
<circle cx="21" cy="21.8" r="2.4"/>
</g></g></svg>
<div class="t" style="left:429.14px;top:876.31px;font-size:17px;letter-spacing:-0.044px;color:#1d2129;">Correos Express</div>
<div class="t" style="left:991.51px;top:877.81px;font-size:17px;letter-spacing:-1.003px;color:#1d2129;">ES</div>
<div class="t" style="left:1227.84px;top:877.81px;font-size:17px;letter-spacing:0.331px;color:#1d2129;">04-11-2025 08:40:22</div>
<div class="r" style="left:1500px;top:876px;width:37.5px;height:21.5px;background:#0e8064;border-radius:11px"></div>
<div class="r" style="left:1519px;top:878.3px;width:17px;height:17px;background:#fff;border-radius:50%"></div>
<div class="r" style="left:1734.7px;top:882.2px;width:8px;height:8px;background:#1bb532;border-radius:50%"></div>
<div class="t" style="left:1754.97px;top:877.41px;font-size:17px;letter-spacing:0.446px;color:#1d2129;">Attivo</div>
<div class="t" style="left:1971.11px;top:860.81px;font-size:17px;letter-spacing:-0.014px;color:#0e8064;-webkit-text-stroke:0.25px #0e8064">Riautorizza</div>
<div class="t" style="left:1970.93px;top:894.41px;font-size:17px;letter-spacing:0.241px;color:#0e8064;-webkit-text-stroke:0.25px #0e8064">Impostazioni logistiche</div>
<div class="r" style="left:1963px;top:67px;width:280px;height:316px;background:#fff;border-radius:5px;box-shadow:0 4px 14px rgba(0,0,0,0.10), 0 0 2px rgba(0,0,0,0.06)"></div>
<div class="t" style="left:1984.25px;top:84.07px;font-size:20px;letter-spacing:0.187px;color:#1d2129;">Integrazione</div>
<div class="t" style="left:1985.15px;top:127.47px;font-size:20px;letter-spacing:0.029px;color:#1d2129;">Ordini e spedizione</div>
<div class="t" style="left:1984.25px;top:170.87px;font-size:20px;letter-spacing:0.13px;color:#1d2129;">Impostazioni generali</div>
<div class="t" style="left:1984.25px;top:214.27px;font-size:20px;letter-spacing:0.368px;color:#1d2129;">Impostazioni prodotti</div>
<div class="t" style="left:1984.25px;top:257.67px;font-size:20px;letter-spacing:0.174px;color:#1d2129;">Impostazioni inventario</div>
<div class="t" style="left:1984.25px;top:301.07px;font-size:20px;letter-spacing:0.261px;color:#1d2129;">Impostazioni Sottoutente</div>
<div class="t" style="left:1985.09px;top:344.47px;font-size:20px;letter-spacing:-0.11px;color:#1d2129;">Gestione Ruoli</div>
<div class="t" style="left:1936.44px;top:122.56px;font-size:33px;letter-spacing:0px;color:#f24a47;">2</div>
<div class="r" style="left:1966.7px;top:120px;width:202.3px;height:39px;border:5.8px solid #f24a47;border-radius:11px;box-sizing:border-box"></div>
<div class="r" style="left:2157px;top:894px;width:64px;height:64px;border-radius:50%;background:#fff;box-shadow:0 2px 12px rgba(0,0,0,0.10)"></div>
<svg class="r" style="left:2174px;top:914px;" width="31" height="26" viewBox="0 0 31 26"><g fill="#2aab14">
<path d="M15.5 3 A11.5 11.5 0 0 1 27 13.5" fill="none" stroke="#2aab14" stroke-width="1.8"/>
<path d="M15.5 3 A11.5 11.5 0 0 0 4 13.5" fill="none" stroke="#2aab14" stroke-width="1.8"/>
<ellipse cx="4" cy="13.5" rx="3.6" ry="4.6"/><ellipse cx="27" cy="13.5" rx="3.6" ry="4.6"/>
<rect x="8" y="8" width="15" height="11" rx="5.5"/><path d="M10 17 L10 22 L14 18 Z"/>
<path d="M26.5 17 Q25 23 17 24" fill="none" stroke="#2aab14" stroke-width="1.8"/>
<ellipse cx="16.5" cy="24" rx="3" ry="2"/>
</g></svg>
</body></html>
